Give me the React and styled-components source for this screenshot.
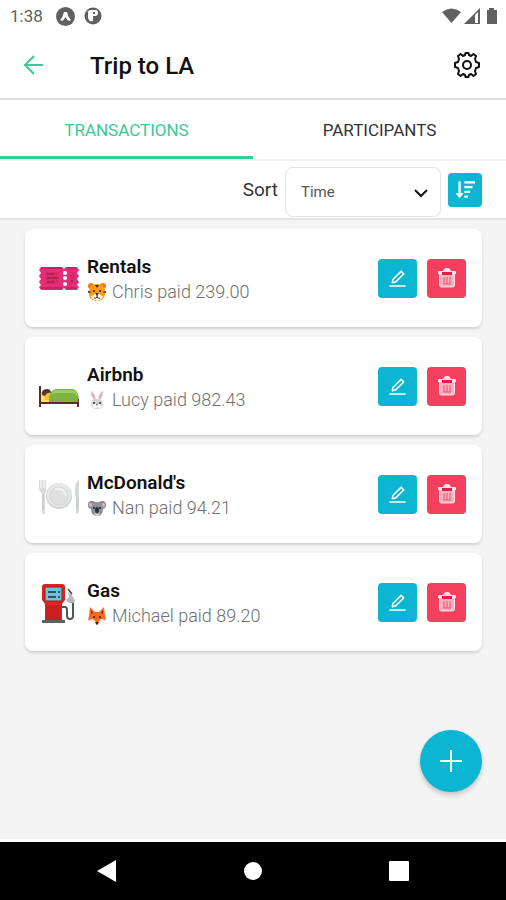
import { useState } from 'react';
import styled, { createGlobalStyle } from 'styled-components';
import { AiOutlineEdit } from 'react-icons/ai';
import { FaSortAmountDown } from 'react-icons/fa';

const COLORS = {
    green: '#3cc996',
    cyan: '#0cb6d3',
    red: '#f43f5e',
    page: '#f4f4f4',
    line: '#dedede',
    status: '#606060',
    muted: '#707070',
};

const GlobalStyle = createGlobalStyle`
    * {
        box-sizing: border-box;
    }

    body {
        margin: 0;
        background: ${COLORS.page};
        font-family: Roboto, 'Liberation Sans', sans-serif;
        color: #111;
    }

    h1, h2, p {
        margin: 0;
    }

    button, select {
        font-family: inherit;
        cursor: pointer;
    }

    svg {
        display: block;
        flex-shrink: 0;
    }
`;

const Screen = styled.div`
    display: flex;
    flex-direction: column;
    min-height: 100vh;
`;

const StatusBar = styled.div`
    display: flex;
    align-items: center;
    justify-content: space-between;
    height: 32px;
    padding: 0 7px 0 10px;
    background: #fff;
    color: ${COLORS.status};
`;

const StatusGroup = styled.div`
    display: flex;
    align-items: center;
    gap: ${({ $gap }) => $gap}px;
`;

const Clock = styled.span`
    margin-right: 4px;
    font-size: 17px;
    line-height: 20px;
`;

const Header = styled.header`
    display: flex;
    align-items: center;
    height: 68px;
    padding: 0 25px 0 20px;
    background: #fff;
    border-bottom: 2px solid ${COLORS.line};
`;

const IconButton = styled.button`
    display: flex;
    padding: 0;
    border: none;
    background: none;
    color: ${({ $color }) => $color};
`;

const Title = styled.h1`
    flex: 1;
    padding: 2px 0 0 44px;
    font-size: 24px;
    font-weight: 500;
    line-height: 32px;
`;

const Tabs = styled.div`
    display: flex;
    background: #fff;
    border-bottom: 2px solid #f0f0f0;
`;

const Tab = styled.button`
    flex: 1;
    height: 59px;
    padding: 3px 0 0;
    border: none;
    border-bottom: 3px solid ${({ $active }) => ($active ? COLORS.green : 'transparent')};
    background: none;
    color: ${({ $active }) => ($active ? COLORS.green : '#333')};
    font-size: 17px;
    line-height: 20px;
`;

const SortBar = styled.div`
    display: flex;
    align-items: center;
    justify-content: flex-end;
    gap: 7px;
    height: 59px;
    padding: 0 24px;
    background: #fff;
    border-bottom: 2px solid #e4e4e4;
`;

const SortLabel = styled.label`
    font-size: 19px;
    line-height: 24px;
    color: #333;
`;

const SelectBox = styled.div`
    display: grid;
    align-items: center;
    width: 156px;
    padding-top: 4px;

    & > * {
        grid-area: 1 / 1;
    }

    & > svg {
        justify-self: end;
        margin-right: 12px;
        pointer-events: none;
    }
`;

const Select = styled.select`
    appearance: none;
    width: 100%;
    height: 50px;
    padding: 0 15px;
    border: 1px solid #e2e2e2;
    border-radius: 8px;
    background: #fff;
    color: #555;
    font-size: 15px;
`;

const ActionButton = styled.button`
    display: flex;
    align-items: center;
    justify-content: center;
    width: ${({ $size }) => $size}px;
    height: ${({ $size }) => $size}px;
    padding: 0;
    border: none;
    border-radius: 4px;
    background: ${({ $color }) => $color};
    color: #fff;
`;

const Content = styled.main`
    display: flex;
    flex: 1;
    flex-direction: column;
    padding: 9px 24px 47px 25px;
    border-bottom: 3px solid #fff;
`;

const List = styled.ul`
    display: flex;
    flex: 1;
    flex-direction: column;
    gap: 10px;
    margin: 0;
    padding: 0;
    list-style: none;
`;

const Card = styled.li`
    display: flex;
    align-items: center;
    gap: 7px;
    height: 98px;
    padding: 0 16px 0 13px;
    border-radius: 8px;
    background: #fff;
    box-shadow: 0 2px 3px rgba(0, 0, 0, 0.14);
`;

const Details = styled.div`
    display: flex;
    flex: 1;
    flex-direction: column;
    padding-top: 2px;
`;

const Name = styled.h2`
    font-size: 19px;
    font-weight: 600;
    line-height: 25px;
`;

const Payment = styled.p`
    display: flex;
    align-items: center;
    gap: 5px;
    color: ${COLORS.muted};
    font-size: 18px;
    font-weight: 300;
    line-height: 25px;
`;

const Actions = styled.div`
    display: flex;
    gap: 10px;
`;

const AddButton = styled.button`
    display: flex;
    align-items: center;
    align-self: flex-end;
    justify-content: center;
    width: 62px;
    height: 62px;
    padding: 0;
    border: none;
    border-radius: 50%;
    background: ${COLORS.cyan};
    color: #fff;
    box-shadow: 0 3px 5px rgba(0, 0, 0, 0.2);
`;

const NavBar = styled.nav`
    display: flex;
    align-items: center;
    justify-content: space-around;
    height: 58px;
    padding: 0 34px;
    background: #000;
`;

function GearIcon() {
    return (
        <svg width="28" height="28" viewBox="0 0 28 28" fill="none" stroke="currentColor" strokeWidth="2">
            <path d="M10 5L12 4L12.500 2h3L16 4l2 1 2.500-2L23 5l-1 3 1 3 3 1v4l-3 1-1 3 1 3-2.500 2L18 23l-2 1-.5 2h-3L12 24l-2-1-2.500 2L5 23l1-3-1-3-3-1v-4l3-1 1-3-1-3 2.500-2z" strokeLinejoin="round" />
            <circle cx="14" cy="14" r="4" />
        </svg>
    );
}

function TicketIcon() {
    return (
        <svg width="42" height="42" viewBox="0 0 42 42">
            <path d="M3 10h21l2 2 2-2h11l2 3-2 3 2 3-2 3 2 3-2 3 2 2-2 3H28l-2-2-2 2H3l-2-3 2-2-2-3 2-3-2-3 2-3-2-3z" fill="#e52e79" />
            <path d="M3 11h21M3 31h21M29 11h9M29 31h9" stroke="#bd205c" strokeWidth="1.5" />
            <path d="M7 15h14v12H7zM32 15h5v12h-5z" fill="#d92a6c" />
            <path d="M9 17h7M9 21h11M9 25h8M33 24h2" stroke="#8b1745" strokeWidth="1" />
            <g fill="#fff">
                <circle cx="27" cy="16" r="2" />
                <circle cx="27" cy="21" r="2" />
                <circle cx="27" cy="27" r="2" />
            </g>
        </svg>
    );
}

function BedIcon() {
    return (
        <svg width="42" height="42" viewBox="0 -3 42 42">
            <path d="M3 24h12v10H3z" fill="#fbe65a" />
            <path d="M5 26q1-5 6-4l2 3-1 7H7z" fill="#f7c52d" />
            <path d="M4 27q-1-6 5-6 4 0 4 4-4-1-6 3z" fill="#543930" />
            <path d="M11 34q-1-11 7-13h17q6 1 6 13z" fill="#7cb342" />
            <path d="M13 27q2-5 6-5h15q5 0 6 6-3-3-7-3H20q-4 0-7 2z" fill="#9ccc65" />
            <path d="M1 18h2v16h37v-3h1v8h-2v-3H3v3H1z" fill="#5d2c24" />
        </svg>
    );
}

function PlateIcon() {
    return (
        <svg width="42" height="42" viewBox="0 -2 42 42">
            <circle cx="21" cy="21" r="13" fill="#d3d5d6" />
            <circle cx="21" cy="20" r="12" fill="#e8e8e8" />
            <circle cx="21" cy="21" r="9" fill="#e0e0e0" stroke="#d2d4d5" />
            <path d="M17 14q9-2 11 7" stroke="#f0f0f0" strokeWidth="2" fill="none" />
            <path d="M1 5v8q0 4 3 5v19q0 2 2 2t1-2V18q2-1 1-5V5" fill="#d9dbdc" />
            <path d="M3 5v8M6 5v8" stroke="#fff" />
            <path d="M41 4q-5 4-4 18h1v14q0 3 1 3t2-2z" fill="#d6d9da" />
            <path d="M5 19v16M39 22v12" stroke="#bfc3c5" />
        </svg>
    );
}

function GasIcon() {
    return (
        <svg width="42" height="42" viewBox="1 -2 42 42">
            <path d="M24 24h4q2 0 2 3v6q0 3 3 3t3-3V19" fill="none" stroke="#505558" strokeWidth="2" />
            <path d="M31 9l4 3 3 6q-1 3-6 2l-3-3 3-3z" fill="#b5b9bb" />
            <path d="M31 6l4 5" stroke="#424242" strokeWidth="1.5" />
            <path d="M5 4q0-3 3-3h17q3 0 3 3v13l-3 4v17H8V21l-3-4z" fill="#da2525" />
            <path d="M9 22h15v16H9z" fill="#c91f1f" />
            <path d="M8 4h17v14H8z" fill="#73bfe0" stroke="#a11b1b" />
            <path d="M11 9h8M11 14h8M21 9h2M21 14h2" stroke="#34515e" strokeWidth="2" />
            <path d="M5 37h23v3H5z" fill="#616161" />
        </svg>
    );
}

function TigerFace() {
    return (
        <svg width="20" height="20" viewBox="0 0 20 20">
            <circle cx="4" cy="4" r="3" fill="#ef7f0c" />
            <circle cx="16" cy="4" r="3" fill="#ef7f0c" />
            <path d="M10 2c6 0 8 3 8 9s-4 8-8 8-8-2-8-8 2-9 8-9z" fill="#fb9a1b" />
            <path d="M4 14q3 0 4-3h4q1 3 4 3-1 4-6 5-5-1-6-5z" fill="#fff4df" />
            <path d="M8 3h4l-2 3zM1 9l4 1-4 1zM19 9l-4 1 4 1zM8 11h4l-2 3z" fill="#403028" />
            <path d="M10 13v2M7 16q2 1 3-1 1 2 3 1" stroke="#403028" fill="none" />
            <circle cx="7" cy="9" r="1" fill="#222" />
            <circle cx="13" cy="9" r="1" fill="#222" />
        </svg>
    );
}

function RabbitFace() {
    return (
        <svg width="20" height="20" viewBox="0 0 20 20">
            <path d="M8 12Q3 6 4 1q4 1 5 9M12 12q5-6 4-11-4 1-5 9" fill="#cdd2d5" />
            <path d="M8 9Q5 6 5 3q3 2 3 6M12 9q3-3 3-6-3 2-3 6" fill="#ef9fb4" />
            <path d="M10 9q5 0 6 5-1 5-6 5t-6-5q1-5 6-5z" fill="#cfd4d7" />
            <circle cx="8" cy="16" r="2" fill="#fff" />
            <circle cx="12" cy="16" r="2" fill="#fff" />
            <circle cx="7" cy="13" r="1" fill="#333" />
            <circle cx="13" cy="13" r="1" fill="#333" />
            <path d="M9 14h2l-1 2z" fill="#755" />
        </svg>
    );
}

function KoalaFace() {
    return (
        <svg width="20" height="20" viewBox="0 0 20 20">
            <circle cx="5" cy="7" r="4" fill="#858b8e" />
            <circle cx="15" cy="7" r="4" fill="#858b8e" />
            <circle cx="4" cy="7" r="2" fill="#efafba" />
            <circle cx="16" cy="7" r="2" fill="#efafba" />
            <path d="M10 4q6 0 6 7t-6 7-6-7 6-7z" fill="#8d9498" />
            <path d="M7 15q3 2 6 0-1 3-3 3t-3-3z" fill="#d5d8da" />
            <ellipse cx="10" cy="12" rx="2" ry="3" fill="#333" />
            <circle cx="7" cy="10" r="1" fill="#222" />
            <circle cx="13" cy="10" r="1" fill="#222" />
        </svg>
    );
}

function FoxFace() {
    return (
        <svg width="20" height="20" viewBox="0 0 20 20">
            <path d="M3 1l5 5h4l5-5 1 9 1 4-6 2-3 3-3-3-6-2 1-4z" fill="#f4691e" />
            <path d="M4 4l2 3-2 1zM16 4l-2 3 2 1z" fill="#7b321e" />
            <path d="M1 14l5-1 3 3v2l-3-2zM19 14l-5-1-3 3v2l3-2z" fill="#fff0df" />
            <circle cx="7" cy="11" r="1" fill="#302018" />
            <circle cx="13" cy="11" r="1" fill="#302018" />
            <path d="M8 16h4l-2 3z" fill="#302018" />
        </svg>
    );
}

function TrashIcon() {
    return (
        <svg width="20" height="20" viewBox="0 0 20 20" fill="none" stroke="#fff">
            <path d="M2.500 6h15v11q0 2-2 2h-11q-2 0-2-2z" fill="#fff" fillOpacity="0.6" strokeOpacity="0.8" />
            <path d="M1 4q0-1 1-1h4q1-3 3-3h2q2 0 3 3h4q1 0 1 1v2H1z" fill="#fff" stroke="none" opacity="0.85" />
            <path d="M5 4h10v3H5z" fill="#d82149" stroke="none" />
            <path d="M7 9v7M10 9v7M13 9v7M6 16h8" stroke="#e8506f" />
        </svg>
    );
}

const TRANSACTIONS = [
    { name: 'Rentals', payer: 'Chris', amount: '239.00', Icon: TicketIcon, Face: TigerFace },
    { name: 'Airbnb', payer: 'Lucy', amount: '982.43', Icon: BedIcon, Face: RabbitFace },
    { name: "McDonald's", payer: 'Nan', amount: '94.21', Icon: PlateIcon, Face: KoalaFace },
    { name: 'Gas', payer: 'Michael', amount: '89.20', Icon: GasIcon, Face: FoxFace },
];

function Transaction({ name, payer, amount, Icon, Face }) {
    return (
        <Card>
            <Icon />
            <Details>
                <Name>{name}</Name>
                <Payment>
                    <Face />
                    {payer} paid {amount}
                </Payment>
            </Details>
            <Actions>
                <ActionButton $size={39} $color={COLORS.cyan} aria-label={`Edit ${name}`}>
                    <AiOutlineEdit size={21} />
                </ActionButton>
                <ActionButton $size={39} $color={COLORS.red} aria-label={`Delete ${name}`}>
                    <TrashIcon />
                </ActionButton>
            </Actions>
        </Card>
    );
}

export default function App() {
    const [tab, setTab] = useState('Transactions');

    return (
        <Screen>
            <GlobalStyle />
            <StatusBar>
                <StatusGroup $gap={9}>
                    <Clock>1:38</Clock>
                    <svg width="19" height="19" viewBox="0 0 19 19">
                        <circle cx="9.5" cy="9.5" r="9.5" fill={COLORS.status} />
                        <path d="M4 13q3-3 4-8h3q1 5 4 8l-2 1q-2-1-3.500-4Q8 13 6 14z" fill="#fff" />
                    </svg>
                    <svg width="18" height="18" viewBox="0 0 18 18">
                        <circle cx="9" cy="9" r="8.500" fill={COLORS.status} />
                        <path d="M3 5q2-2 4-2h5q2 0 2 3t-3 3H9v5q-3 1-4-1l-1-2V5z" fill="#fff" />
                        <path d="M9 5h2v2H9z" fill={COLORS.status} />
                    </svg>
                </StatusGroup>
                <StatusGroup $gap={3}>
                    <svg width="19" height="16" viewBox="0 0 19 16" fill="currentColor">
                        <path d="M0 4q9.500-7 19 0L9.500 15z" />
                    </svg>
                    <svg width="16" height="16" viewBox="0 0 16 16" fill="currentColor">
                        <path d="M0 16L16 0v16zM11 7v8h3V4z" fillRule="evenodd" />
                    </svg>
                    <svg width="16" height="16" viewBox="0 0 16 16" fill="currentColor">
                        <path d="M6 0h5v2h3v14H4V2h2z" />
                    </svg>
                </StatusGroup>
            </StatusBar>
            <Header>
                <IconButton $color={COLORS.green} aria-label="Back">
                    <svg width="26" height="26" viewBox="0 0 26 26" fill="none" stroke="currentColor" strokeWidth="2">
                        <path d="M23 13H4M14 4l-9 9 9 9" />
                    </svg>
                </IconButton>
                <Title>Trip to LA</Title>
                <IconButton $color="#111" aria-label="Settings">
                    <GearIcon />
                </IconButton>
            </Header>
            <Tabs role="tablist">
                {['Transactions', 'Participants'].map((label) => (
                    <Tab
                        key={label}
                        role="tab"
                        aria-selected={tab === label}
                        $active={tab === label}
                        onClick={() => setTab(label)}
                    >
                        {label.toUpperCase()}
                    </Tab>
                ))}
            </Tabs>
            <SortBar>
                <SortLabel htmlFor="sort">Sort</SortLabel>
                <SelectBox>
                    <Select id="sort" defaultValue="Time">
                        <option>Time</option>
                        <option>Amount</option>
                    </Select>
                    <svg width="16" height="16" viewBox="0 0 16 16" fill="none" stroke="#111" strokeWidth="2">
                        <path d="M2 6l6 6 6-6" />
                    </svg>
                </SelectBox>
                <ActionButton $size={34} $color={COLORS.cyan} aria-label="Sort descending">
                    <FaSortAmountDown size={19} />
                </ActionButton>
            </SortBar>
            <Content>
                <List>
                    {TRANSACTIONS.map((item) => (
                        <Transaction key={item.name} {...item} />
                    ))}
                </List>
                <AddButton aria-label="Add transaction">
                    <svg width="24" height="24" viewBox="0 0 24 24" stroke="currentColor" strokeWidth="2">
                        <path d="M12 1v22M1 12h22" />
                    </svg>
                </AddButton>
            </Content>
            <NavBar>
                <IconButton $color="#fff" aria-label="System back">
                    <svg width="20" height="22" viewBox="0 0 20 22" fill="currentColor">
                        <path d="M0 11L19 0v22z" />
                    </svg>
                </IconButton>
                <IconButton $color="#fff" aria-label="System home">
                    <svg width="20" height="20" viewBox="0 0 20 20" fill="currentColor">
                        <circle cx="10" cy="10" r="9" />
                    </svg>
                </IconButton>
                <IconButton $color="#fff" aria-label="Recent apps">
                    <svg width="20" height="20" viewBox="0 0 20 20" fill="currentColor">
                        <rect width="20" height="20" rx="1" />
                    </svg>
                </IconButton>
            </NavBar>
        </Screen>
    );
}
